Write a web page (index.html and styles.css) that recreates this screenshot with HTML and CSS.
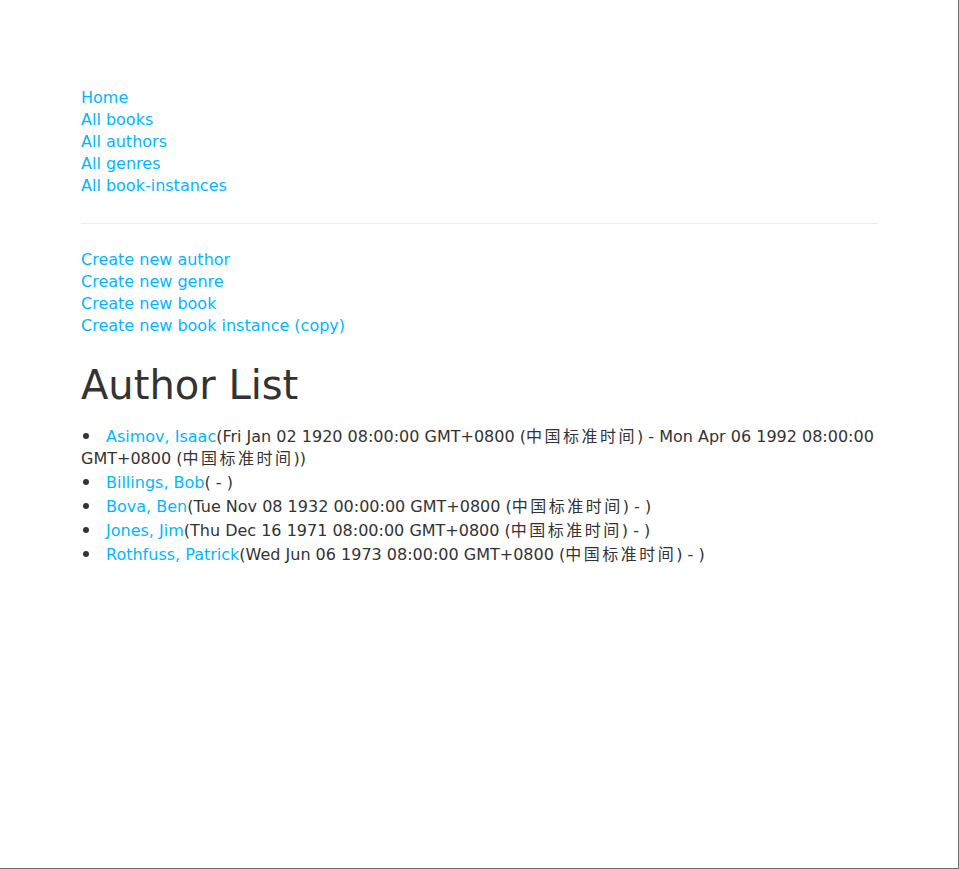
FILE: index.html
```html
<!DOCTYPE html>
<html lang="en">
<head>
<meta charset="utf-8">
<title>Local Library</title>
<link rel="stylesheet" href="styles.css">
</head>
<body>
<div class="frame">
  <div class="page">
    <ul class="nav">
      <li><a href="#">Home</a></li>
      <li><a href="#">All books</a></li>
      <li><a href="#">All authors</a></li>
      <li><a href="#">All genres</a></li>
      <li><a href="#">All book-instances</a></li>
    </ul>
    <hr class="divider">
    <ul class="nav">
      <li><a href="#">Create new author</a></li>
      <li><a href="#">Create new genre</a></li>
      <li><a href="#">Create new book</a></li>
      <li><a href="#">Create new book instance (copy)</a></li>
    </ul>
    <h1 class="title">Author List</h1>
    <ul class="authors">
      <li><a href="#">Asimov, Isaac</a>(Fri Jan 02 1920 08:00:00 GMT+0800 (<span class="cjk">中国标准时间</span>) - Mon Apr 06 1992 08:00:00 GMT+0800 (<span class="cjk">中国标准时间</span>))</li>
      <li><a href="#">Billings, Bob</a>( - )</li>
      <li><a href="#">Bova, Ben</a>(Tue Nov 08 1932 00:00:00 GMT+0800 (<span class="cjk">中国标准时间</span>) - )</li>
      <li><a href="#">Jones, Jim</a>(Thu Dec 16 1971 08:00:00 GMT+0800 (<span class="cjk">中国标准时间</span>) - )</li>
      <li><a href="#">Rothfuss, Patrick</a>(Wed Jun 06 1973 08:00:00 GMT+0800 (<span class="cjk">中国标准时间</span>) - )</li>
    </ul>
  </div>
</div>
</body>
</html>
```
FILE: styles.css
```css
html, body {
  margin: 0;
  padding: 0;
  background: #fff;
}

body {
  font-family: "DejaVu Sans", Verdana, "Noto Sans CJK SC", sans-serif;
  font-size: 16px;
  line-height: 22px;
  color: #333;
}

.frame {
  box-sizing: border-box;
  width: 959px;
  height: 869px;
  border-right: 1px solid #6e6e6e;
  border-bottom: 1px solid #6e6e6e;
  overflow: hidden;
}

.page {
  padding: 87px 80px 0 81px;
}

a {
  color: #00b7ff;
  text-decoration: none;
}

.nav {
  list-style: none;
  margin: 0;
  padding: 0;
}

.divider {
  margin: 26px 0 25px;
  border: 0;
  border-top: 1px solid #eeeeee;
  height: 0;
}

.title {
  margin: 26px 0 19px;
  font-size: 40px;
  line-height: 44px;
  font-weight: normal;
  color: #333;
}

.authors {
  list-style: none;
  margin: 0;
  padding: 0;
}

.authors li {
  margin-bottom: 2px;
}

.authors li::before {
  content: "";
  display: inline-block;
  width: 6px;
  height: 6px;
  border-radius: 50%;
  background: #333;
  margin: 0 17px 0 2px;
  vertical-align: 3px;
}

.cjk {
  letter-spacing: 2.5px;
}
```
